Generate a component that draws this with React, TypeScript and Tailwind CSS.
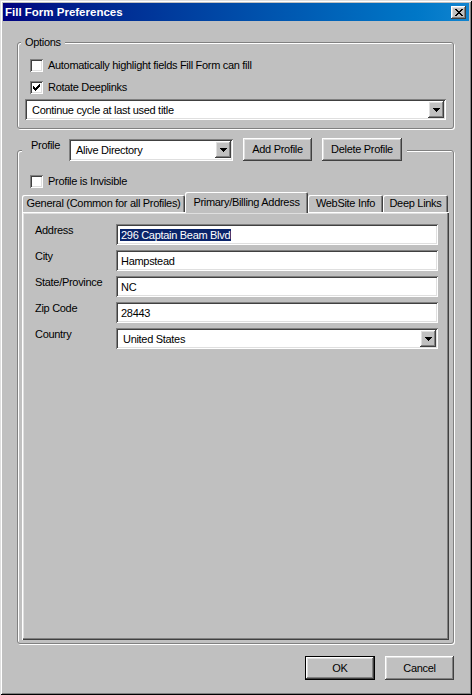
import React from "react";

const RAISED =
  "shadow-[inset_-1px_-1px_#404040,inset_1px_1px_#ffffff,inset_-2px_-2px_#808080,inset_2px_2px_#dfdfdf]";
const SUNKEN =
  "shadow-[inset_1px_1px_#808080,inset_-1px_-1px_#ffffff,inset_2px_2px_#404040,inset_-2px_-2px_#dfdfdf]";
const GROUP =
  "border border-[#808080] rounded-[3px] shadow-[inset_1px_1px_#ffffff,1px_1px_#ffffff]";

function Arrow() {
  return (
    <svg width="7" height="4" viewBox="0 0 7 4" shapeRendering="crispEdges">
      <path d="M0 0H7V1H6V2H5V3H4V4H3V3H2V2H1V1H0Z" fill="#000" />
    </svg>
  );
}

function Combo({ text, className = "" }: { text: string; className?: string }) {
  return (
    <div className={`flex items-center bg-white h-[21px] ${SUNKEN} ${className}`}>
      <span className="flex-1 pl-[7px] pt-[2px] whitespace-nowrap overflow-hidden">{text}</span>
      <div
        className={`w-[16px] h-[17px] mr-[2px] shrink-0 bg-[#c0c0c0] flex items-center justify-center ${RAISED}`}
      >
        <Arrow />
      </div>
    </div>
  );
}

function Checkbox({ checked }: { checked?: boolean }) {
  return (
    <div
      className={`w-[13px] h-[13px] bg-white shrink-0 flex items-center justify-center ${SUNKEN}`}
    >
      {checked && (
        <svg width="7" height="7" viewBox="0 0 7 7" shapeRendering="crispEdges">
          <rect x="6" y="0" width="1" height="1" fill="#000" />
          <rect x="5" y="1" width="2" height="1" fill="#000" />
          <rect x="0" y="2" width="1" height="1" fill="#000" />
          <rect x="4" y="2" width="3" height="1" fill="#000" />
          <rect x="0" y="3" width="2" height="1" fill="#000" />
          <rect x="3" y="3" width="3" height="1" fill="#000" />
          <rect x="0" y="4" width="5" height="1" fill="#000" />
          <rect x="1" y="5" width="3" height="1" fill="#000" />
          <rect x="2" y="6" width="1" height="1" fill="#000" />
        </svg>
      )}
    </div>
  );
}

function Field({ label, children }: { label: string; children: React.ReactNode }) {
  return (
    <div className="flex items-start h-[21px]">
      <span className="w-[81px] shrink-0 whitespace-nowrap">{label}</span>
      {children}
    </div>
  );
}

function TextBox({ children }: { children: React.ReactNode }) {
  return (
    <div className={`flex-1 h-[21px] bg-white flex items-center pl-[4px] pt-[1px] whitespace-nowrap ${SUNKEN}`}>
      {children}
    </div>
  );
}

const TAB =
  "h-[17px] shrink-0 flex items-center justify-center bg-[#c0c0c0] rounded-t-[2px] whitespace-nowrap shadow-[inset_1px_1px_#ffffff,inset_-1px_0_#404040,inset_-2px_0_#808080]";

export default function App() {
  return (
    <div
      className={`w-[472px] h-[695px] bg-[#c0c0c0] p-[3px] flex flex-col text-black text-[11px] leading-[13px] tracking-[-0.3px] font-['Liberation_Sans',Arial,sans-serif] shadow-[inset_1px_1px_#dfdfdf,inset_-1px_-1px_#000000,inset_2px_2px_#ffffff,inset_-2px_-2px_#808080]`}
    >
      {/* Title bar */}
      <div className="h-[18px] shrink-0 flex items-center bg-linear-to-r from-[#000080] to-[#1084d0] pl-[2px] pr-[3px]">
        <span className="flex-1 text-white font-bold text-[11.5px] tracking-normal">
          Fill Form Preferences
        </span>
        <div className={`w-[15px] h-[13px] bg-[#c0c0c0] flex items-center justify-center ${RAISED}`}>
          <svg width="8" height="7" viewBox="0 0 8 7" shapeRendering="crispEdges">
            <rect x="0" y="0" width="2" height="1" fill="#000" />
            <rect x="6" y="0" width="2" height="1" fill="#000" />
            <rect x="1" y="1" width="2" height="1" fill="#000" />
            <rect x="5" y="1" width="2" height="1" fill="#000" />
            <rect x="2" y="2" width="4" height="1" fill="#000" />
            <rect x="3" y="3" width="2" height="1" fill="#000" />
            <rect x="2" y="4" width="4" height="1" fill="#000" />
            <rect x="1" y="5" width="2" height="1" fill="#000" />
            <rect x="5" y="5" width="2" height="1" fill="#000" />
            <rect x="0" y="6" width="2" height="1" fill="#000" />
            <rect x="6" y="6" width="2" height="1" fill="#000" />
          </svg>
        </div>
      </div>

      {/* Options group */}
      <div className={`ml-[14px] mt-[21px] w-[437px] h-[87px] shrink-0 flex flex-col ${GROUP}`}>
        <div className="-mt-[7px] ml-[3px] self-start bg-[#c0c0c0] px-[4px] h-[13px]">Options</div>
        <div className="mt-[10px] pl-[12px] flex items-center gap-[5px] h-[13px]">
          <Checkbox />
          <span>Automatically highlight fields Fill Form can fill</span>
        </div>
        <div className="mt-[9px] pl-[12px] flex items-center gap-[5px] h-[13px]">
          <Checkbox checked />
          <span>Rotate Deeplinks</span>
        </div>
        <div className="mt-[5px] px-[7px]">
          <Combo text="Continue cycle at last used title" />
        </div>
      </div>

      {/* Profile group */}
      <div className={`ml-[14px] mt-[21px] w-[437px] flex-1 flex flex-col ${GROUP}`}>
        <div className="-mt-[13px] ml-[4px] self-start bg-[#c0c0c0] pl-[9px] pr-[5px] h-[23px] flex items-center">
          <span className="w-[38px] self-start mt-[1px]">Profile</span>
          <Combo text="Alive Directory" className="w-[164px] h-[22px]" />
          <div className={`ml-[10px] w-[69px] h-[23px] flex items-center justify-center ${RAISED}`}>
            Add Profile
          </div>
          <div className={`ml-[10px] w-[80px] h-[23px] flex items-center justify-center ${RAISED}`}>
            Delete Profile
          </div>
        </div>

        <div className="mt-[14px] pl-[12px] flex items-center gap-[5px] h-[13px]">
          <Checkbox />
          <span>Profile is Invisible</span>
        </div>

        <div className="mt-[4px] px-[4px] pb-[3px] flex-1 flex flex-col">
          <div className="h-[20px] flex items-end shrink-0">
            <div className={`${TAB} w-[163px]`}>General (Common for all Profiles)</div>
            <div className={`${TAB} w-[123px] h-[21px] -mb-[1px] relative z-10 pb-[1px]`}>
              Primary/Billing Address
            </div>
            <div className={`${TAB} w-[75px]`}>WebSite Info</div>
            <div className={`${TAB} w-[65px]`}>Deep Links</div>
          </div>
          <div className="flex-1 flex flex-col gap-[5px] pt-[12px] pl-[13px] pr-[11px] shadow-[inset_1px_1px_#ffffff,inset_-1px_-1px_#404040,inset_-2px_-2px_#808080,inset_2px_2px_#dfdfdf]">
            <Field label="Address">
              <TextBox>
                <span className="bg-[#0a246a] text-white px-[1px] leading-[12px]">
                  296 Captain Beam Blvd
                </span>
              </TextBox>
            </Field>
            <Field label="City">
              <TextBox>
                <span className="pl-[1px]">Hampstead</span>
              </TextBox>
            </Field>
            <Field label="State/Province">
              <TextBox>
                <span className="pl-[1px]">NC</span>
              </TextBox>
            </Field>
            <Field label="Zip Code">
              <TextBox>
                <span className="pl-[1px]">28443</span>
              </TextBox>
            </Field>
            <Field label="Country">
              <Combo text="United States" className="flex-1" />
            </Field>
          </div>
        </div>
      </div>

      {/* Bottom buttons */}
      <div className="flex justify-end gap-[10px] mt-[12px] mb-[12px] mr-[15px] shrink-0">
        <div className="w-[70px] h-[24px] border border-black">
          <div className={`w-full h-full flex items-center justify-center ${RAISED}`}>OK</div>
        </div>
        <div className={`w-[69px] h-[24px] flex items-center justify-center ${RAISED}`}>Cancel</div>
      </div>
    </div>
  );
}
